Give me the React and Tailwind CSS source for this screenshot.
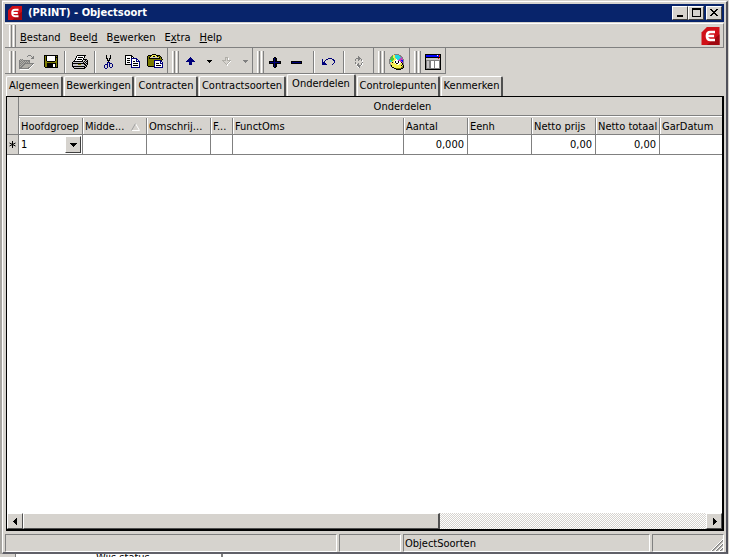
import React from 'react';
import clsx from 'clsx';

const PALETTE = {
    k: '#000000',
    w: '#ffffff',
    g: '#808080',
    s: '#b0aea8',
    n: '#00007b',
    b: '#0000ff',
    o: '#7b7b00',
    y: '#f4ee50',
    l: '#c6c3c6',
    c: '#20d8e0',
    e: '#48c838',
    m: '#c040c0',
    r: '#ff0000',
    p: '#e8a0a0',
};

const ICONS = {
    open: [
        '................',
        '.........ggg....',
        '........g...g.g.',
        '.............gg.',
        '............ggg.',
        '.gsg............',
        'gsgsggggggg.....',
        'ggsgsgsgsgg.....',
        'gsgsgsgsgsg.....',
        'ggsgsgggggggggg.',
        'gsgsggsssssssgw.',
        'ggsggsssssssgw..',
        'gsggsssssssgw...',
        'gggssssssggw....',
        'ggggggggggw.....',
        '.wwwwwwwww......',
    ],
    save: [
        '................',
        '.kkkkkkkkkkkkkk.',
        '.kokwwwwwwwwkok.',
        '.kokwwwwwwwwkkk.',
        '.kokwwwwwwwwkok.',
        '.kokwwwwwwwwkok.',
        '.kokwwwwwwwwkok.',
        '.kookkkkkkkkook.',
        '.kooooooooooook.',
        '.kookkkkkkkkkok.',
        '.kookkkkkkwwkok.',
        '.kookkkkkkwwkok.',
        '.kookkkkkkwwkok.',
        '..kkkkkkkkkkkkk.',
        '................',
        '................',
    ],
    print: [
        '................',
        '.....kkkkkkkkk..',
        '....kwwwwwwwk...',
        '....kwkkkkkwk...',
        '...kwwwwwwwk....',
        '...kwkkkkkwkkkk.',
        '..kwwwwwwwk.lklk',
        '.kkkkkkkkkklklkk',
        'kllllllllllklklk',
        'kkkkkkkkkkkkklkk',
        'klllllooolllkklk',
        'kllllllllllllkk.',
        'kkkkkkkkkkkkklk.',
        '.kllllllllllkk..',
        '..kkkkkkkkkkk...',
        '................',
    ],
    cut: [
        '................',
        '.....k...k......',
        '.....k...k......',
        '.....k...k......',
        '.....kk.kk......',
        '......k.k.......',
        '......kkk.......',
        '.......k........',
        '......nnn.......',
        '......n.nnn.....',
        '....nnn.n..n....',
        '...n..n.n..n....',
        '...n..n.n..n....',
        '...n..n..nn.....',
        '....nn..........',
        '................',
    ],
    copy: [
        '................',
        'kkkkkkk.........',
        'kwwwwwkk........',
        'kwwwwwkwk.......',
        'kwkkkwnnnnnn....',
        'kwwwwwnwwwwnn...',
        'kwkkkwnwwwwnwn..',
        'kwwwwwnwkkwnnnn.',
        'kwkkkwnwwwwwwwn.',
        'kwwwwwnwkkkkkwn.',
        'kkkkkknwwwwwwwn.',
        '......nwkkkkkwn.',
        '......nwwwwwwwn.',
        '......nnnnnnnnn.',
        '................',
        '................',
    ],
    paste: [
        '.....kkkk.......',
        '.kkkkyyyykkkk...',
        'kookyykkyykook..',
        'kokylllllllykok.',
        'kokkkkkkkkkkkok.',
        'kooooooooooooook',
        'koooooonnnnnnnk.',
        'koooooonwwwwwnn.',
        'koooooonwwwwwnwn',
        'koooooonwkkkwnnn',
        'koooooonwwwwwwwn',
        'koooooonwkkkkkwn',
        '.kkkkkknwwwwwwwn',
        '.......nnnnnnnnn',
        '................',
        '................',
    ],
    up: [
        '................',
        '................',
        '................',
        '.......n........',
        '......nnn.......',
        '.....nnnnn......',
        '....nnnnnnn.....',
        '...nnnnnnnnn....',
        '......nnn.......',
        '......nnn.......',
        '......nnn.......',
        '................',
        '................',
        '................',
        '................',
        '................',
    ],
    down: [
        '................',
        '................',
        '................',
        '......sss.......',
        '......s.sw......',
        '......s.sw......',
        '...ssss.ssss....',
        '....s.....sw....',
        '.....s...sw.....',
        '......s.sw......',
        '.......sw.......',
        '........w.......',
        '................',
        '................',
        '................',
        '................',
    ],
    plus: [
        '................',
        '................',
        '................',
        '.......kk.......',
        '......knkk......',
        '......knkk......',
        '......knkk......',
        '..kkkkknkkkkkk..',
        '..knnnnnnnnnnk..',
        '..kkkkknkkkkkk..',
        '......knkk......',
        '......knkk......',
        '......knkk......',
        '.......kk.......',
        '................',
        '................',
    ],
    minus: [
        '................',
        '................',
        '................',
        '................',
        '................',
        '................',
        '................',
        '..kkkkkkkkkkk...',
        '..knnnnnnnnnk...',
        '..kkkkkkkkkkk...',
        '................',
        '................',
        '................',
        '................',
        '................',
        '................',
    ],
    undo: [
        '................',
        '................',
        '................',
        '................',
        '.......nnnn.....',
        '.n...nn....nn...',
        '.n..n.......nn..',
        '.n.n.........n..',
        '.nnn.........n..',
        '.nnnn.......n...',
        '.nnnnn.....n....',
        '................',
        '................',
        '................',
        '................',
        '................',
    ],
    refresh: [
        '................',
        '................',
        '.......g........',
        '.......gg.......',
        '.....ggggg......',
        '....g..gg.g.....',
        '....g..g..gw....',
        '...........w....',
        '....g......g....',
        '....g..g..gw....',
        '.....wgg..gw....',
        '......ggggw.....',
        '......wgg.......',
        '.......wg.......',
        '................',
        '................',
    ],
    globe: [
        '.....ggggg......',
        '...gyyccccgg....',
        '..geyycccccgg...',
        '.geeyyccccccmg..',
        '.geeeyyccccmmg..',
        'geeeeyywccmmmmg.',
        'gceeyywwwmmmbbg.',
        'gccyywkwwkwmmbg.',
        'gpykywkwwkwwkmg.',
        'gpyyyywkkwwyykg.',
        '.gyyyyyywwyyykg.',
        '.gkyyyyyyyyykyk.',
        '..kyyyyyyyyyyok.',
        '...kkyyyyyyyook.',
        '.....kkoooookk..',
        '.......kkkkk....',
    ],
    form: [
        'kkkkkkkkkkkkkkkk',
        'kbbbbbbbbbbbwbrk',
        'kbbbbbbbbbbbbbrk',
        'kkkkkkkkkkkkkkkk',
        'kllllllllllllrlk',
        'kllllllllllllllk',
        'kggggggggggggggk',
        'kgllggwwwgwwwwgk',
        'kgllggwwwgwwwwgk',
        'kgllggwwwgwwwwgk',
        'kgllggwwwgwwwwgk',
        'kgllggwwwgwwwwgk',
        'kgllggwwwgwwwwgk',
        'kgllggwwwgwwwwgk',
        'kggggggggggggggk',
        'kkkkkkkkkkkkkkkk',
    ],
};

const PixelIcon = ({ name }) => (
    <svg viewBox="0 0 16 16" shapeRendering="crispEdges" className="w-4 h-4 shrink-0" aria-hidden="true">
        {ICONS[name].flatMap((row, y) =>
            [...row].map((ch, x) =>
                ch === '.' ? null : <rect key={`${x}-${y}`} x={x} y={y} width="1" height="1" fill={PALETTE[ch]} />
            )
        )}
    </svg>
);

const Triangle = ({ points, className, fill = '#000' }) => (
    <svg viewBox="0 0 7 7" shapeRendering="crispEdges" className={clsx('w-[7px] h-[7px]', className)} fill={fill} aria-hidden="true">
        <polygon points={points} />
    </svg>
);

const Logo = ({ className }) => (
    <svg viewBox="0 0 20 20" className={className} aria-hidden="true">
        <path d="M6 0H20V20H0V6Z" fill="#d01018" />
        <path d="M20 8V20H6Z" fill="#a00810" />
        <path d="M15 5.5H10C7 5.5 6 7.500 6 10s1 4.500 4 4.500h5M6.500 10H14" fill="none" stroke="#fff" strokeWidth="2.800" />
    </svg>
);

const Grip = () => (
    <div className="flex gap-px h-[22px] shrink-0" aria-hidden="true">
        <div className="w-[3px] border-l border-r border-l-white border-r-[#808080]" />
        <div className="w-[3px] border-l border-r border-l-white border-r-[#808080]" />
    </div>
);

const Separator = () => <div className="w-[2px] h-[22px] shrink-0 bg-[#808080] border-r border-white" />;

const ToolButton = ({ icon, label, disabled, className }) => (
    <button type="button" aria-label={label} disabled={disabled} className={clsx('flex h-[22px] items-center justify-center shrink-0', className)}>
        <PixelIcon name={icon} />
    </button>
);

const Caret = ({ label, disabled }) => (
    <button type="button" aria-label={label} disabled={disabled} className="flex w-3 h-[22px] items-center justify-center shrink-0">
        <Triangle points="1,2 6,2 3.5,5" fill={disabled ? '#808080' : '#000'} />
    </button>
);

const Band = ({ children, className }) => (
    <div className={clsx('flex h-[26px] items-center pl-1 pt-0.5 border-r border-b border-[#808080]', className)}>
        {children}
    </div>
);

const WindowButton = ({ label, children }) => (
    <button
        type="button"
        aria-label={label}
        className="flex w-4 h-3.5 items-center justify-center bg-[#d6d3ce] border border-t-white border-l-white border-r-[#404040] border-b-[#404040]"
    >
        <svg viewBox="0 0 12 10" shapeRendering="crispEdges" className="w-3 h-2.5" aria-hidden="true">{children}</svg>
    </button>
);

const MENU = [
    ['', 'B', 'estand'],
    ['Beel', 'd', ''],
    ['B', 'e', 'werken'],
    ['E', 'x', 'tra'],
    ['', 'H', 'elp'],
];

const TABS = [
    { label: 'Algemeen', width: 'w-[57px]' },
    { label: 'Bewerkingen', width: 'w-[70px]' },
    { label: 'Contracten', width: 'w-[63px]' },
    { label: 'Contractsoorten', width: 'w-[87px]' },
    { label: 'Onderdelen', width: 'w-[69px]', active: true },
    { label: 'Controlepunten', width: 'w-[83px]' },
    { label: 'Kenmerken', width: 'w-[62px]' },
];

const COLUMNS = [
    { label: 'Hoofdgroep', width: 'w-16' },
    { label: 'Midde...', width: 'w-16', sorted: true },
    { label: 'Omschrij...', width: 'w-16' },
    { label: 'F...', width: 'w-[22px]' },
    { label: 'FunctOms', width: 'w-[171px]' },
    { label: 'Aantal', width: 'w-16', value: '0,000' },
    { label: 'Eenh', width: 'w-16' },
    { label: 'Netto prijs', width: 'w-16', value: '0,00' },
    { label: 'Netto totaal', width: 'w-16', value: '0,00' },
    { label: 'GarDatum', width: '' },
];

const TitleBar = () => (
    <header className="flex h-[18px] items-center bg-[#08246b] pl-[3px] pr-0.5 text-white">
        <Logo className="w-[14px] h-[14px]" />
        <h1 className="pl-1.5 font-bold flex-1 whitespace-nowrap">(PRINT) - Objectsoort</h1>
        <WindowButton label="Minimaliseren">
            <rect x="3" y="7" width="6" height="2" />
        </WindowButton>
        <WindowButton label="Maximaliseren">
            <path d="M2 0h9v9H2zM3 2v6h7V2z" fillRule="evenodd" />
        </WindowButton>
        <div className="w-0.5" />
        <WindowButton label="Sluiten">
            <path d="M2 1h2v1h1v1h2V2h1V1h2v1H9v1H8v1H7v1h1v1h1v1h1v1H8V7H7V6H5v1H4v1H2V7h1V6h1V5h1V4H4V3H3V2H2z" />
        </WindowButton>
    </header>
);

const MenuBar = () => (
    <nav className="flex h-[25px] items-center mt-px pl-1 pr-[3px] border-t border-r border-b border-t-white border-r-[#808080] border-b-[#808080]">
        <Grip />
        {MENU.map(([before, key, after]) => (
            <button key={key} type="button" className="-ml-px pt-1 px-[5px] whitespace-nowrap">
                {before}<u className="underline-offset-1">{key}</u>{after}
            </button>
        ))}
        <Logo className="w-[19px] h-[18px] ml-auto" />
    </nav>
);

const Toolbar = () => (
    <div className="flex" role="toolbar">
        <Band className="w-[163px]">
            <Grip />
            <ToolButton icon="open" label="Openen" disabled className="w-[22px]" />
            <ToolButton icon="save" label="Opslaan" className="w-[26px]" />
            <Separator />
            <ToolButton icon="print" label="Afdrukken" className="w-7" />
            <Separator />
            <ToolButton icon="cut" label="Knippen" className="w-[26px]" />
            <ToolButton icon="copy" label="Kopiëren" className="w-[22px]" />
            <ToolButton icon="paste" label="Plakken" className="w-[22px]" />
        </Band>
        <Band className="w-[85px]">
            <Grip />
            <ToolButton icon="up" label="Omhoog" className="w-6" />
            <Caret label="Omhoog opties" />
            <ToolButton icon="down" label="Omlaag" disabled className="w-6" />
            <Caret label="Omlaag opties" disabled />
        </Band>
        <Band className="w-[121px]">
            <Grip />
            <ToolButton icon="plus" label="Toevoegen" className="w-[22px]" />
            <ToolButton icon="minus" label="Verwijderen" className="w-[22px]" />
            <div className="w-2" />
            <Separator />
            <ToolButton icon="undo" label="Ongedaan maken" className="w-7" />
            <Separator />
            <ToolButton icon="refresh" label="Vernieuwen" disabled className="w-7" />
        </Band>
        <Band className="w-9">
            <Grip />
            <ToolButton icon="globe" label="Webpagina" className="w-6" />
        </Band>
        <Band className="w-9">
            <Grip />
            <ToolButton icon="form" label="Formulier" className="w-6" />
        </Band>
    </div>
);

const Tabs = () => (
    <div className="flex items-end h-[22px] pl-px" role="tablist">
        {TABS.map(({ label, width, active }) => (
            <button
                key={label}
                type="button"
                role="tab"
                aria-selected={!!active}
                className={clsx(
                    'flex justify-center mr-px whitespace-nowrap border-t border-l border-r-2 border-t-white border-l-white border-r-[#505050] rounded-t-xs',
                    width,
                    active ? 'h-[22px] pt-px' : 'h-5 pt-px'
                )}
            >
                {label}
            </button>
        ))}
    </div>
);

const Grid = () => (
    <table className="w-full table-fixed border-separate border-spacing-0">
        <colgroup>
            <col className="w-3" />
            {COLUMNS.map(({ label, width }) => <col key={label} className={width} />)}
        </colgroup>
        <thead className="bg-[#d6d3ce]">
            <tr className="h-[19px]">
                <td rowSpan={2} className="p-0 border-r border-b border-[#808080]" />
                <th colSpan={COLUMNS.length} className="p-0 pt-0.5 pl-16 font-normal border-b border-b-[#808080]">Onderdelen</th>
            </tr>
            <tr className="h-[19px]">
                {COLUMNS.map(({ label, sorted }) => (
                    <th key={label} className="group p-0 font-normal text-left border-t border-b border-t-white border-b-[#808080]">
                        <div className="flex h-4 items-center pl-px pt-0.5 border-l border-r border-l-white border-r-[#808080] group-last:border-r-0 whitespace-nowrap overflow-hidden">
                            {label}
                            {sorted && (
                                <svg viewBox="0 0 9 8" className="w-[9px] h-2 ml-auto mr-1.5" fill="none" aria-hidden="true">
                                    <path d="M4.500 .5L8.500 7.500H.5" stroke="#fff" />
                                    <path d="M4.500 .5L.5 7.500" stroke="#a0a0a0" />
                                </svg>
                            )}
                        </div>
                    </th>
                ))}
            </tr>
        </thead>
        <tbody>
            <tr className="h-5">
                <td className="p-0 bg-[#d6d3ce] border-r border-b border-[#808080]">
                    <svg viewBox="0 0 7 7" className="w-[7px] h-[7px] mx-auto" stroke="#000" aria-hidden="true">
                        <path d="M3.500 0v7M.5 2l6 3M.5 5l6-3" />
                    </svg>
                </td>
                {COLUMNS.map(({ label, value }, i) => (
                    <td key={label} className={clsx('p-0 text-right border-b border-[#808080]', i < COLUMNS.length - 1 && 'border-r', i === 0 ? 'pr-px' : 'pr-[3px]')}>
                        {i === 0 ? (
                            <div className="flex items-center">
                                <input aria-label={label} defaultValue="1" className="min-w-0 flex-1 pl-0.5 outline-none" />
                                <button
                                    type="button"
                                    aria-label="Hoofdgroep kiezen"
                                    className="flex w-4 h-[17px] shrink-0 items-center justify-center bg-[#d6d3ce] border border-t-white border-l-white border-r-[#404040] border-b-[#404040]"
                                >
                                    <Triangle points="0,2 7,2 3.5,6" />
                                </button>
                            </div>
                        ) : value}
                    </td>
                ))}
            </tr>
        </tbody>
    </table>
);

const ScrollButton = ({ label, points }) => (
    <button
        type="button"
        aria-label={label}
        className="flex w-4 shrink-0 items-center justify-center bg-[#d6d3ce] border border-t-white border-l-white border-r-[#505050] border-b-[#505050]"
    >
        <Triangle points={points} />
    </button>
);

const ScrollBar = () => (
    <div className="flex h-4 bg-[#d6d3ce]">
        <ScrollButton label="Naar links" points="5,0 5,7 1,3.5" />
        <div className="flex-1 bg-[repeating-conic-gradient(#d6d3ce_0_25%,#ffffff_0_50%)] bg-[length:2px_2px]">
            <div className="w-[61%] h-full bg-[#d6d3ce] border border-t-white border-l-white border-r-2 border-r-[#505050] border-b-[#505050]" />
        </div>
        <ScrollButton label="Naar rechts" points="2,0 2,7 6,3.5" />
    </div>
);

const StatusPanel = ({ children, className }) => (
    <div className={clsx('h-[18px] pl-px border border-t-[#808080] border-l-[#808080] border-r-white border-b-white', className)}>
        {children}
    </div>
);

const StatusBar = () => (
    <footer className="flex gap-0.5 pt-[3px]">
        <StatusPanel className="flex-1" />
        <StatusPanel className="w-[62px]" />
        <StatusPanel className="w-[247px] pt-px">ObjectSoorten</StatusPanel>
        <StatusPanel className="flex w-[72px] items-end justify-end">
            <svg viewBox="0 0 12 12" className="w-3 h-3" aria-hidden="true">
                <path d="M1 12L12 1M5 12L12 5M9 12L12 9" stroke="#808080" strokeWidth="1.500" />
                <path d="M0 12L12 0M4 12L12 4M8 12L12 8" stroke="#fff" strokeWidth="1" />
            </svg>
        </StatusPanel>
    </footer>
);

const App = () => (
    <div className="flex flex-col h-screen overflow-hidden bg-[#d6d3ce] text-black text-[11px] leading-4 font-['DejaVu_Sans_Condensed','Noto_Sans',sans-serif]">
        <div className="flex flex-1 min-h-0 border-l-2 border-l-[#a8a6a2] border-r border-r-[#d6d3ce]">
            <div className="flex flex-col flex-1 min-w-0 mt-px border-t border-l border-r-2 border-b-2 border-t-white border-l-white border-r-[#50505a] border-b-[#606068] pt-0.5 pl-0.5 pr-0.5">
                <TitleBar />
                <MenuBar />
                <Toolbar />
                <Tabs />
                <main className="flex flex-col flex-1 min-h-0 ml-px bg-white border-t border-l border-r-2 border-b-2 border-black">
                    <div className="flex-1 min-h-0 overflow-hidden">
                        <Grid />
                    </div>
                    <ScrollBar />
                </main>
                <StatusBar />
            </div>
        </div>
        {/* Window underneath, only its top edge peeks out */}
        <div className="flex h-[3px] shrink-0 overflow-hidden bg-white">
            <div className="w-4 shrink-0 bg-[#d6d3ce] border-r border-[#808080]" />
            <div className="w-[207px] shrink-0 pl-[80px] border-r-2 border-[#808080]">
                <p className="-mt-1 leading-4">Wijs status</p>
            </div>
        </div>
    </div>
);

export default App;
